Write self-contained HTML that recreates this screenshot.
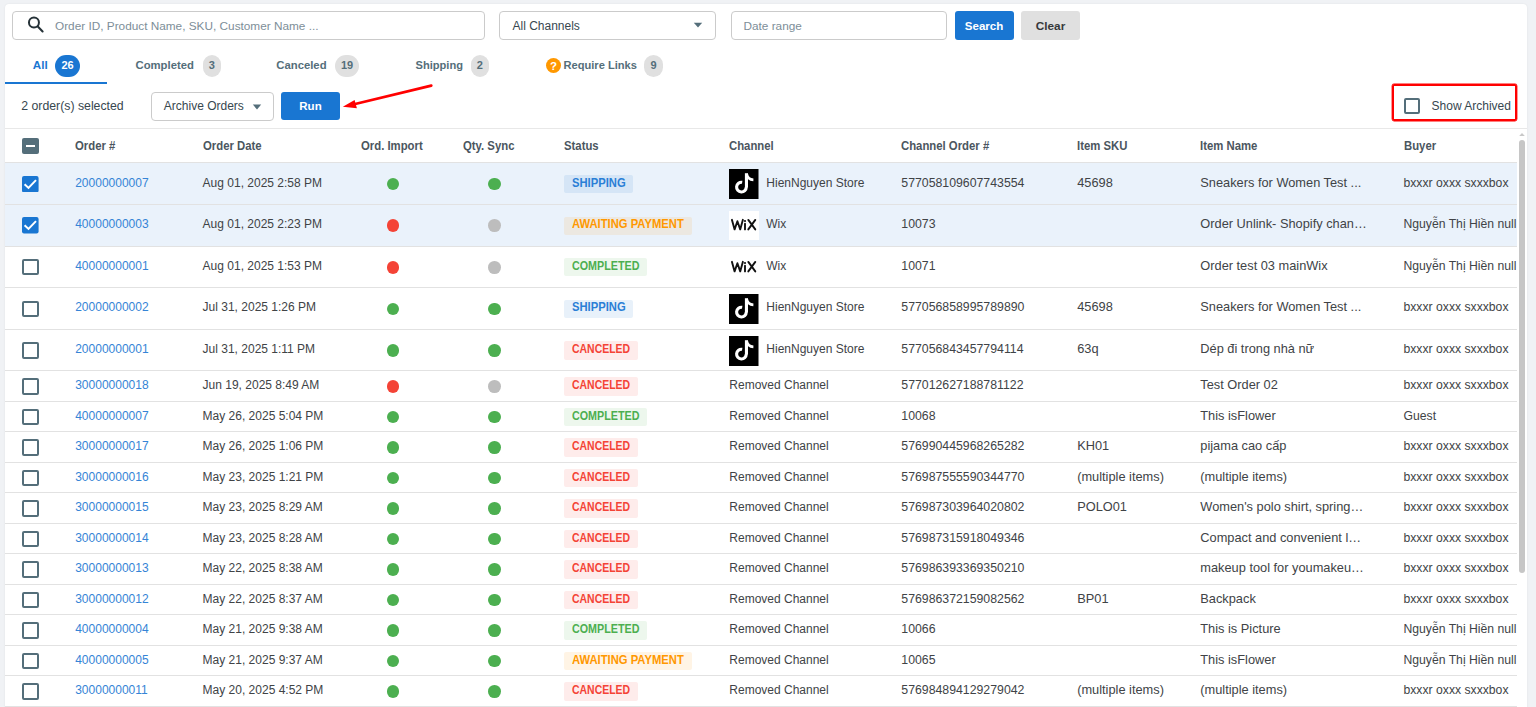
<!DOCTYPE html>
<html><head><meta charset="utf-8"><style>
html,body{margin:0;padding:0;}
body{width:1536px;height:707px;overflow:hidden;position:relative;background:#f0f2f5;font-family:"Liberation Sans", sans-serif;}
.t{position:absolute;white-space:nowrap;line-height:20px;height:20px;}
.badge{position:absolute;border-radius:12px;font-size:11px;font-weight:bold;text-align:center;line-height:20.5px;}
.sb{position:absolute;height:18.4px;border-radius:2px;}
</style></head><body>
<div style="position:absolute;left:5px;top:4px;width:1522px;height:760px;background:#fff;border-radius:4px;box-shadow:0 0 2px rgba(0,0,0,0.08);"></div>
<div style="position:absolute;left:12px;top:11px;width:471px;height:27px;border:1px solid #cbcbcb;border-radius:4px;background:#fff;"></div>
<svg style="position:absolute;left:26px;top:15px" width="20" height="20" viewBox="0 0 20 20"><circle cx="7.95" cy="7.5" r="5" fill="none" stroke="#263238" stroke-width="2"/><line x1="11.8" y1="11.6" x2="16.6" y2="16.4" stroke="#263238" stroke-width="2.1" stroke-linecap="round"/></svg>
<div class="t" style="left:55px;top:15.7px;font-size:11.8px;font-weight:normal;color:#7d8e98;">Order ID, Product Name, SKU, Customer Name ...</div>
<div style="position:absolute;left:499px;top:11px;width:215px;height:27px;border:1px solid #cbcbcb;border-radius:4px;background:#fff;"></div>
<div class="t" style="left:512.5px;top:15.7px;font-size:12px;font-weight:normal;color:#37474f;">All Channels</div>
<svg style="position:absolute;left:693px;top:22px" width="10" height="7" viewBox="0 0 10 7"><path d="M0.8 0.8 L9.2 0.8 L5 5.6 Z" fill="#546e7a"/></svg>
<div style="position:absolute;left:731px;top:11px;width:214px;height:27px;border:1px solid #cbcbcb;border-radius:4px;background:#fff;"></div>
<div class="t" style="left:743.5px;top:15.7px;font-size:11.8px;font-weight:normal;color:#7d8e98;">Date range</div>
<div style="position:absolute;left:954.5px;top:11px;width:59px;height:28.5px;background:#1976d2;border-radius:3px;"></div>
<div class="t" style="left:954.5px;width:59px;text-align:center;top:15.5px;font-size:11.5px;font-weight:bold;color:#fff">Search</div>
<div style="position:absolute;left:1021px;top:11px;width:59px;height:28.5px;background:#e0e0e0;border-radius:3px;"></div>
<div class="t" style="left:1021px;width:59px;text-align:center;top:15.5px;font-size:11.8px;font-weight:bold;color:#37393b">Clear</div>
<div class="t" style="left:32.8px;top:55.0px;font-size:11.6px;font-weight:bold;color:#1976d2;">All</div>
<div class="badge" style="left:55px;top:54.5px;width:25px;height:22.5px;background:#1976d2;color:#fff">26</div>
<div style="position:absolute;left:5px;top:82px;width:102px;height:2px;background:#1976d2;"></div>
<div class="t" style="left:135.5px;top:55.0px;font-size:11.3px;font-weight:bold;color:#546e7a;">Completed</div>
<div class="badge" style="left:202.6px;top:54.5px;width:18.2px;height:22px;background:#e0e0e0;color:#546e7a">3</div>
<div class="t" style="left:276.3px;top:55.0px;font-size:11.3px;font-weight:bold;color:#546e7a;">Canceled</div>
<div class="badge" style="left:334.8px;top:54.5px;width:24.5px;height:22px;background:#e0e0e0;color:#546e7a">19</div>
<div class="t" style="left:415.5px;top:55.0px;font-size:11.1px;font-weight:bold;color:#546e7a;">Shipping</div>
<div class="badge" style="left:470.7px;top:54.5px;width:18.3px;height:22px;background:#e0e0e0;color:#546e7a">2</div>
<svg style="position:absolute;left:546.4px;top:57.7px" width="15" height="15" viewBox="0 0 15 15"><circle cx="7.5" cy="7.5" r="7.5" fill="#ff9800"/><text x="7.5" y="11.6" text-anchor="middle" font-family="Liberation Sans" font-weight="bold" font-size="11.5" fill="#fff">?</text></svg>
<div class="t" style="left:563.5px;top:55.0px;font-size:11.1px;font-weight:bold;color:#546e7a;">Require Links</div>
<div class="badge" style="left:644.3px;top:54.5px;width:18.6px;height:22px;background:#e0e0e0;color:#546e7a">9</div>
<div class="t" style="left:21.2px;top:96px;font-size:12.3px;font-weight:normal;color:#37474f;">2 order(s) selected</div>
<div style="position:absolute;left:151px;top:92px;width:120.5px;height:27px;border:1px solid #cbcbcb;border-radius:4px;background:#fff;"></div>
<div class="t" style="left:163.8px;top:95.9px;font-size:12px;font-weight:normal;color:#37474f;">Archive Orders</div>
<svg style="position:absolute;left:251.5px;top:104px" width="10" height="7" viewBox="0 0 10 7"><path d="M0.8 0.5 L9.2 0.5 L5 5.4 Z" fill="#546e7a"/></svg>
<div style="position:absolute;left:281px;top:92px;width:59.2px;height:28px;background:#1976d2;border-radius:3px;"></div>
<div class="t" style="left:281px;width:59px;text-align:center;top:96px;font-size:11.5px;font-weight:bold;color:#fff">Run</div>
<svg style="position:absolute;left:0;top:0" width="460" height="130" viewBox="0 0 460 130"><line x1="431.3" y1="85.6" x2="352" y2="104.8" stroke="#ff0000" stroke-width="2.7" stroke-linecap="round"/><path d="M342.8 106.8 L354.6 100 L356.9 108.2 Z" fill="#ff0000"/></svg>
<div style="position:absolute;left:1392px;top:84px;width:121.2px;height:32.8px;border:2px solid #ff0000;border-radius:2px;box-shadow:0 0 0 0.4px #ff0000;"></div>
<div style="position:absolute;left:1404px;top:98.3px;width:12px;height:12px;border:2px solid #546e7a;border-radius:2px;"></div>
<div class="t" style="left:1431.6px;top:95.9px;font-size:12px;font-weight:normal;color:#37474f;">Show Archived</div>
<div style="position:absolute;left:5px;top:128px;width:1522px;height:1px;background:#e8e8e8;"></div>
<div class="t" style="left:75.2px;top:136px;font-size:12.4px;font-weight:bold;color:#4b5660;transform:scaleX(0.915);transform-origin:0 0;">Order #</div>
<div class="t" style="left:202.6px;top:136px;font-size:12.4px;font-weight:bold;color:#4b5660;transform:scaleX(0.915);transform-origin:0 0;">Order Date</div>
<div class="t" style="left:360.9px;top:136px;font-size:12.4px;font-weight:bold;color:#4b5660;transform:scaleX(0.915);transform-origin:0 0;">Ord. Import</div>
<div class="t" style="left:462.5px;top:136px;font-size:12.4px;font-weight:bold;color:#4b5660;transform:scaleX(0.915);transform-origin:0 0;">Qty. Sync</div>
<div class="t" style="left:564.3px;top:136px;font-size:12.4px;font-weight:bold;color:#4b5660;transform:scaleX(0.915);transform-origin:0 0;">Status</div>
<div class="t" style="left:729.4px;top:136px;font-size:12.4px;font-weight:bold;color:#4b5660;transform:scaleX(0.915);transform-origin:0 0;">Channel</div>
<div class="t" style="left:901.3px;top:136px;font-size:12.4px;font-weight:bold;color:#4b5660;transform:scaleX(0.915);transform-origin:0 0;">Channel Order #</div>
<div class="t" style="left:1077.2px;top:136px;font-size:12.4px;font-weight:bold;color:#4b5660;transform:scaleX(0.915);transform-origin:0 0;">Item SKU</div>
<div class="t" style="left:1200.3px;top:136px;font-size:12.4px;font-weight:bold;color:#4b5660;transform:scaleX(0.915);transform-origin:0 0;">Item Name</div>
<div class="t" style="left:1403.7px;top:136px;font-size:12.4px;font-weight:bold;color:#4b5660;transform:scaleX(0.915);transform-origin:0 0;">Buyer</div>
<div style="position:absolute;left:22.2px;top:138px;width:16.6px;height:16px;background:#546e7a;border-radius:2px;"></div>
<div style="position:absolute;left:26px;top:145px;width:9px;height:2px;background:#fff;"></div>
<div style="position:absolute;left:5px;top:163.3px;width:1512px;height:41.6px;background:#eaf2fb;"></div>
<svg style="position:absolute;left:22.2px;top:175.70px" width="16.6" height="16.4" viewBox="0 0 16.6 16.4"><rect width="16.6" height="16.4" rx="2" fill="#1976d2"/><path d="M2.6 8.2 L6.5 11.9 L14 4.1" fill="none" stroke="#fff" stroke-width="2"/></svg>
<div class="t" style="left:75.2px;top:173px;font-size:12px;font-weight:normal;color:#3584d6;">20000000007</div>
<div class="t" style="left:202.6px;top:173px;font-size:12px;font-weight:normal;color:#404346;">Aug 01, 2025 2:58 PM</div>
<div style="position:absolute;left:386.6px;top:177.7px;width:12.8px;height:12.8px;background:#4caf50;border-radius:50%;"></div>
<div style="position:absolute;left:488.2px;top:177.7px;width:12.8px;height:12.8px;background:#4caf50;border-radius:50%;"></div>
<div class="sb" style="left:564px;top:174.90px;width:69px;background:rgba(25,118,210,0.1)"></div>
<div class="t" style="left:572px;top:173px;font-size:12.2px;font-weight:bold;color:#2a7fd6;transform:scaleX(0.921);transform-origin:0 0;">SHIPPING</div>
<div style="position:absolute;left:729px;top:169.10px;width:29.5px;height:30px"><svg width="29.5" height="30" viewBox="0 0 29.5 30" style="position:absolute;left:0;top:0"><rect width="29.5" height="30" fill="#000"/><path d="M17.3 18.1 A4.85 4.85 0 1 1 13.2 13.3" fill="none" stroke="#fff" stroke-width="3.1"/><path d="M17.45 4.2 V18.3" stroke="#fff" stroke-width="3.1"/><path d="M17.6 5 Q18.8 10.6 24.4 10.8" fill="none" stroke="#fff" stroke-width="2.8"/></svg></div>
<div class="t" style="left:766.3px;top:173px;font-size:12px;font-weight:normal;color:#404346;">HienNguyen Store</div>
<div class="t" style="left:901.3px;top:173px;font-size:12.3px;font-weight:normal;color:#404346;">577058109607743554</div>
<div class="t" style="left:1077.2px;top:173px;font-size:12.8px;font-weight:normal;color:#404346;">45698</div>
<div class="t" style="left:1200.3px;top:173px;font-size:12.8px;font-weight:normal;color:#404346;">Sneakers for Women Test ...</div>
<div class="t" style="left:1403.5px;top:173px;font-size:12.2px;font-weight:normal;color:#404346;">bxxxr oxxx sxxxbox</div>
<div style="position:absolute;left:5px;top:204.9px;width:1512px;height:41.6px;background:#eaf2fb;"></div>
<svg style="position:absolute;left:22.2px;top:217.30px" width="16.6" height="16.4" viewBox="0 0 16.6 16.4"><rect width="16.6" height="16.4" rx="2" fill="#1976d2"/><path d="M2.6 8.2 L6.5 11.9 L14 4.1" fill="none" stroke="#fff" stroke-width="2"/></svg>
<div class="t" style="left:75.2px;top:214px;font-size:12px;font-weight:normal;color:#3584d6;">40000000003</div>
<div class="t" style="left:202.6px;top:214px;font-size:12px;font-weight:normal;color:#404346;">Aug 01, 2025 2:23 PM</div>
<div style="position:absolute;left:386.6px;top:219.3px;width:12.8px;height:12.8px;background:#f44336;border-radius:50%;"></div>
<div style="position:absolute;left:488.2px;top:219.3px;width:12.8px;height:12.8px;background:#bdbdbd;border-radius:50%;"></div>
<div class="sb" style="left:564px;top:216.50px;width:128px;background:rgba(255,152,0,0.1)"></div>
<div class="t" style="left:572px;top:214px;font-size:12.2px;font-weight:bold;color:#ff9800;transform:scaleX(0.922);transform-origin:0 0;">AWAITING PAYMENT</div>
<div style="position:absolute;left:729px;top:211.1px;width:29.5px;height:29.2px;background:#fff;"></div>
<svg style="position:absolute;left:729px;top:210.40px" width="29.5" height="29.2" viewBox="0 0 29.5 29.2"><g fill="none" stroke="#111" stroke-width="1.9" stroke-linecap="round" stroke-linejoin="round"><path d="M2.9 9.8 L5.6 19.4 L8.4 11.2 L11.2 19.4 L13.9 9.8"/><path d="M16 13.6 V19.4"/><path d="M19.3 9.9 L26.3 19.4 M26.3 9.9 L19.3 19.4"/></g><circle cx="16" cy="11" r="1.1" fill="#111"/></svg>
<div class="t" style="left:766.3px;top:214px;font-size:12px;font-weight:normal;color:#404346;">Wix</div>
<div class="t" style="left:901.3px;top:214px;font-size:12.3px;font-weight:normal;color:#404346;">10073</div>
<div class="t" style="left:1200.3px;top:214px;font-size:12.8px;font-weight:normal;color:#404346;">Order Unlink- Shopify chan…</div>
<div class="t" style="left:1403.5px;top:214px;font-size:12.2px;font-weight:normal;color:#404346;">Nguyễn Thị Hiền null</div>
<div style="position:absolute;left:5px;top:246.5px;width:1512px;height:41.6px;background:#fff;"></div>
<div style="position:absolute;left:22.2px;top:259.1px;width:12.6px;height:12.4px;border:2px solid #546e7a;border-radius:2px;"></div>
<div class="t" style="left:75.2px;top:256px;font-size:12px;font-weight:normal;color:#3584d6;">40000000001</div>
<div class="t" style="left:202.6px;top:256px;font-size:12px;font-weight:normal;color:#404346;">Aug 01, 2025 1:53 PM</div>
<div style="position:absolute;left:386.6px;top:260.9px;width:12.8px;height:12.8px;background:#f44336;border-radius:50%;"></div>
<div style="position:absolute;left:488.2px;top:260.9px;width:12.8px;height:12.8px;background:#bdbdbd;border-radius:50%;"></div>
<div class="sb" style="left:564px;top:258.10px;width:83px;background:rgba(76,175,80,0.1)"></div>
<div class="t" style="left:572px;top:256px;font-size:12.2px;font-weight:bold;color:#4caf50;transform:scaleX(0.882);transform-origin:0 0;">COMPLETED</div>
<div style="position:absolute;left:729px;top:252.7px;width:29.5px;height:29.2px;background:#fff;"></div>
<svg style="position:absolute;left:729px;top:252.00px" width="29.5" height="29.2" viewBox="0 0 29.5 29.2"><g fill="none" stroke="#111" stroke-width="1.9" stroke-linecap="round" stroke-linejoin="round"><path d="M2.9 9.8 L5.6 19.4 L8.4 11.2 L11.2 19.4 L13.9 9.8"/><path d="M16 13.6 V19.4"/><path d="M19.3 9.9 L26.3 19.4 M26.3 9.9 L19.3 19.4"/></g><circle cx="16" cy="11" r="1.1" fill="#111"/></svg>
<div class="t" style="left:766.3px;top:256px;font-size:12px;font-weight:normal;color:#404346;">Wix</div>
<div class="t" style="left:901.3px;top:256px;font-size:12.3px;font-weight:normal;color:#404346;">10071</div>
<div class="t" style="left:1200.3px;top:256px;font-size:12.8px;font-weight:normal;color:#404346;">Order test 03 mainWix</div>
<div class="t" style="left:1403.5px;top:256px;font-size:12.2px;font-weight:normal;color:#404346;">Nguyễn Thị Hiền null</div>
<div style="position:absolute;left:5px;top:288.1px;width:1512px;height:41.6px;background:#fff;"></div>
<div style="position:absolute;left:22.2px;top:300.7px;width:12.6px;height:12.4px;border:2px solid #546e7a;border-radius:2px;"></div>
<div class="t" style="left:75.2px;top:297px;font-size:12px;font-weight:normal;color:#3584d6;">20000000002</div>
<div class="t" style="left:202.6px;top:297px;font-size:12px;font-weight:normal;color:#404346;">Jul 31, 2025 1:26 PM</div>
<div style="position:absolute;left:386.6px;top:302.5px;width:12.8px;height:12.8px;background:#4caf50;border-radius:50%;"></div>
<div style="position:absolute;left:488.2px;top:302.5px;width:12.8px;height:12.8px;background:#4caf50;border-radius:50%;"></div>
<div class="sb" style="left:564px;top:299.70px;width:69px;background:rgba(25,118,210,0.1)"></div>
<div class="t" style="left:572px;top:297px;font-size:12.2px;font-weight:bold;color:#2a7fd6;transform:scaleX(0.921);transform-origin:0 0;">SHIPPING</div>
<div style="position:absolute;left:729px;top:293.90px;width:29.5px;height:30px"><svg width="29.5" height="30" viewBox="0 0 29.5 30" style="position:absolute;left:0;top:0"><rect width="29.5" height="30" fill="#000"/><path d="M17.3 18.1 A4.85 4.85 0 1 1 13.2 13.3" fill="none" stroke="#fff" stroke-width="3.1"/><path d="M17.45 4.2 V18.3" stroke="#fff" stroke-width="3.1"/><path d="M17.6 5 Q18.8 10.6 24.4 10.8" fill="none" stroke="#fff" stroke-width="2.8"/></svg></div>
<div class="t" style="left:766.3px;top:297px;font-size:12px;font-weight:normal;color:#404346;">HienNguyen Store</div>
<div class="t" style="left:901.3px;top:297px;font-size:12.3px;font-weight:normal;color:#404346;">577056858995789890</div>
<div class="t" style="left:1077.2px;top:297px;font-size:12.8px;font-weight:normal;color:#404346;">45698</div>
<div class="t" style="left:1200.3px;top:297px;font-size:12.8px;font-weight:normal;color:#404346;">Sneakers for Women Test ...</div>
<div class="t" style="left:1403.5px;top:297px;font-size:12.2px;font-weight:normal;color:#404346;">bxxxr oxxx sxxxbox</div>
<div style="position:absolute;left:5px;top:329.7px;width:1512px;height:41.6px;background:#fff;"></div>
<div style="position:absolute;left:22.2px;top:342.3px;width:12.6px;height:12.4px;border:2px solid #546e7a;border-radius:2px;"></div>
<div class="t" style="left:75.2px;top:339px;font-size:12px;font-weight:normal;color:#3584d6;">20000000001</div>
<div class="t" style="left:202.6px;top:339px;font-size:12px;font-weight:normal;color:#404346;">Jul 31, 2025 1:11 PM</div>
<div style="position:absolute;left:386.6px;top:344.1px;width:12.8px;height:12.8px;background:#4caf50;border-radius:50%;"></div>
<div style="position:absolute;left:488.2px;top:344.1px;width:12.8px;height:12.8px;background:#4caf50;border-radius:50%;"></div>
<div class="sb" style="left:564px;top:341.30px;width:74px;background:rgba(244,67,54,0.1)"></div>
<div class="t" style="left:572px;top:339px;font-size:12.2px;font-weight:bold;color:#f44336;transform:scaleX(0.857);transform-origin:0 0;">CANCELED</div>
<div style="position:absolute;left:729px;top:335.50px;width:29.5px;height:30px"><svg width="29.5" height="30" viewBox="0 0 29.5 30" style="position:absolute;left:0;top:0"><rect width="29.5" height="30" fill="#000"/><path d="M17.3 18.1 A4.85 4.85 0 1 1 13.2 13.3" fill="none" stroke="#fff" stroke-width="3.1"/><path d="M17.45 4.2 V18.3" stroke="#fff" stroke-width="3.1"/><path d="M17.6 5 Q18.8 10.6 24.4 10.8" fill="none" stroke="#fff" stroke-width="2.8"/></svg></div>
<div class="t" style="left:766.3px;top:339px;font-size:12px;font-weight:normal;color:#404346;">HienNguyen Store</div>
<div class="t" style="left:901.3px;top:339px;font-size:12.3px;font-weight:normal;color:#404346;">577056843457794114</div>
<div class="t" style="left:1077.2px;top:339px;font-size:12.8px;font-weight:normal;color:#404346;">63q</div>
<div class="t" style="left:1200.3px;top:339px;font-size:12.8px;font-weight:normal;color:#404346;">Dép đi trong nhà nữ</div>
<div class="t" style="left:1403.5px;top:339px;font-size:12.2px;font-weight:normal;color:#404346;">bxxxr oxxx sxxxbox</div>
<div style="position:absolute;left:5px;top:371.3px;width:1512px;height:30.5px;background:#fff;"></div>
<div style="position:absolute;left:22.2px;top:378.35px;width:12.6px;height:12.4px;border:2px solid #546e7a;border-radius:2px;"></div>
<div class="t" style="left:75.2px;top:375px;font-size:12px;font-weight:normal;color:#3584d6;">30000000018</div>
<div class="t" style="left:202.6px;top:375px;font-size:12px;font-weight:normal;color:#404346;">Jun 19, 2025 8:49 AM</div>
<div style="position:absolute;left:386.6px;top:380.15px;width:12.8px;height:12.8px;background:#f44336;border-radius:50%;"></div>
<div style="position:absolute;left:488.2px;top:380.15px;width:12.8px;height:12.8px;background:#bdbdbd;border-radius:50%;"></div>
<div class="sb" style="left:564px;top:377.35px;width:74px;background:rgba(244,67,54,0.1)"></div>
<div class="t" style="left:572px;top:375px;font-size:12.2px;font-weight:bold;color:#f44336;transform:scaleX(0.857);transform-origin:0 0;">CANCELED</div>
<div class="t" style="left:729.3px;top:375px;font-size:12px;font-weight:normal;color:#404346;">Removed Channel</div>
<div class="t" style="left:901.3px;top:375px;font-size:12.3px;font-weight:normal;color:#404346;">577012627188781122</div>
<div class="t" style="left:1200.3px;top:375px;font-size:12.8px;font-weight:normal;color:#404346;">Test Order 02</div>
<div class="t" style="left:1403.5px;top:375px;font-size:12.2px;font-weight:normal;color:#404346;">bxxxr oxxx sxxxbox</div>
<div style="position:absolute;left:5px;top:401.8px;width:1512px;height:30.5px;background:#fff;"></div>
<div style="position:absolute;left:22.2px;top:408.85px;width:12.6px;height:12.4px;border:2px solid #546e7a;border-radius:2px;"></div>
<div class="t" style="left:75.2px;top:406px;font-size:12px;font-weight:normal;color:#3584d6;">40000000007</div>
<div class="t" style="left:202.6px;top:406px;font-size:12px;font-weight:normal;color:#404346;">May 26, 2025 5:04 PM</div>
<div style="position:absolute;left:386.6px;top:410.65px;width:12.8px;height:12.8px;background:#4caf50;border-radius:50%;"></div>
<div style="position:absolute;left:488.2px;top:410.65px;width:12.8px;height:12.8px;background:#4caf50;border-radius:50%;"></div>
<div class="sb" style="left:564px;top:407.85px;width:83px;background:rgba(76,175,80,0.1)"></div>
<div class="t" style="left:572px;top:406px;font-size:12.2px;font-weight:bold;color:#4caf50;transform:scaleX(0.882);transform-origin:0 0;">COMPLETED</div>
<div class="t" style="left:729.3px;top:406px;font-size:12px;font-weight:normal;color:#404346;">Removed Channel</div>
<div class="t" style="left:901.3px;top:406px;font-size:12.3px;font-weight:normal;color:#404346;">10068</div>
<div class="t" style="left:1200.3px;top:406px;font-size:12.8px;font-weight:normal;color:#404346;">This isFlower</div>
<div class="t" style="left:1403.5px;top:406px;font-size:12.2px;font-weight:normal;color:#404346;">Guest</div>
<div style="position:absolute;left:5px;top:432.3px;width:1512px;height:30.5px;background:#fff;"></div>
<div style="position:absolute;left:22.2px;top:439.35px;width:12.6px;height:12.4px;border:2px solid #546e7a;border-radius:2px;"></div>
<div class="t" style="left:75.2px;top:436px;font-size:12px;font-weight:normal;color:#3584d6;">30000000017</div>
<div class="t" style="left:202.6px;top:436px;font-size:12px;font-weight:normal;color:#404346;">May 26, 2025 1:06 PM</div>
<div style="position:absolute;left:386.6px;top:441.15px;width:12.8px;height:12.8px;background:#4caf50;border-radius:50%;"></div>
<div style="position:absolute;left:488.2px;top:441.15px;width:12.8px;height:12.8px;background:#4caf50;border-radius:50%;"></div>
<div class="sb" style="left:564px;top:438.35px;width:74px;background:rgba(244,67,54,0.1)"></div>
<div class="t" style="left:572px;top:436px;font-size:12.2px;font-weight:bold;color:#f44336;transform:scaleX(0.857);transform-origin:0 0;">CANCELED</div>
<div class="t" style="left:729.3px;top:436px;font-size:12px;font-weight:normal;color:#404346;">Removed Channel</div>
<div class="t" style="left:901.3px;top:436px;font-size:12.3px;font-weight:normal;color:#404346;">576990445968265282</div>
<div class="t" style="left:1077.2px;top:436px;font-size:12.8px;font-weight:normal;color:#404346;">KH01</div>
<div class="t" style="left:1200.3px;top:436px;font-size:12.8px;font-weight:normal;color:#404346;">pijama cao cấp</div>
<div class="t" style="left:1403.5px;top:436px;font-size:12.2px;font-weight:normal;color:#404346;">bxxxr oxxx sxxxbox</div>
<div style="position:absolute;left:5px;top:462.8px;width:1512px;height:30.5px;background:#fff;"></div>
<div style="position:absolute;left:22.2px;top:469.85px;width:12.6px;height:12.4px;border:2px solid #546e7a;border-radius:2px;"></div>
<div class="t" style="left:75.2px;top:467px;font-size:12px;font-weight:normal;color:#3584d6;">30000000016</div>
<div class="t" style="left:202.6px;top:467px;font-size:12px;font-weight:normal;color:#404346;">May 23, 2025 1:21 PM</div>
<div style="position:absolute;left:386.6px;top:471.65px;width:12.8px;height:12.8px;background:#4caf50;border-radius:50%;"></div>
<div style="position:absolute;left:488.2px;top:471.65px;width:12.8px;height:12.8px;background:#4caf50;border-radius:50%;"></div>
<div class="sb" style="left:564px;top:468.85px;width:74px;background:rgba(244,67,54,0.1)"></div>
<div class="t" style="left:572px;top:467px;font-size:12.2px;font-weight:bold;color:#f44336;transform:scaleX(0.857);transform-origin:0 0;">CANCELED</div>
<div class="t" style="left:729.3px;top:467px;font-size:12px;font-weight:normal;color:#404346;">Removed Channel</div>
<div class="t" style="left:901.3px;top:467px;font-size:12.3px;font-weight:normal;color:#404346;">576987555590344770</div>
<div class="t" style="left:1077.2px;top:467px;font-size:12.8px;font-weight:normal;color:#404346;">(multiple items)</div>
<div class="t" style="left:1200.3px;top:467px;font-size:12.8px;font-weight:normal;color:#404346;">(multiple items)</div>
<div class="t" style="left:1403.5px;top:467px;font-size:12.2px;font-weight:normal;color:#404346;">bxxxr oxxx sxxxbox</div>
<div style="position:absolute;left:5px;top:493.3px;width:1512px;height:30.5px;background:#fff;"></div>
<div style="position:absolute;left:22.2px;top:500.35px;width:12.6px;height:12.4px;border:2px solid #546e7a;border-radius:2px;"></div>
<div class="t" style="left:75.2px;top:497px;font-size:12px;font-weight:normal;color:#3584d6;">30000000015</div>
<div class="t" style="left:202.6px;top:497px;font-size:12px;font-weight:normal;color:#404346;">May 23, 2025 8:29 AM</div>
<div style="position:absolute;left:386.6px;top:502.15px;width:12.8px;height:12.8px;background:#4caf50;border-radius:50%;"></div>
<div style="position:absolute;left:488.2px;top:502.15px;width:12.8px;height:12.8px;background:#4caf50;border-radius:50%;"></div>
<div class="sb" style="left:564px;top:499.35px;width:74px;background:rgba(244,67,54,0.1)"></div>
<div class="t" style="left:572px;top:497px;font-size:12.2px;font-weight:bold;color:#f44336;transform:scaleX(0.857);transform-origin:0 0;">CANCELED</div>
<div class="t" style="left:729.3px;top:497px;font-size:12px;font-weight:normal;color:#404346;">Removed Channel</div>
<div class="t" style="left:901.3px;top:497px;font-size:12.3px;font-weight:normal;color:#404346;">576987303964020802</div>
<div class="t" style="left:1077.2px;top:497px;font-size:12.8px;font-weight:normal;color:#404346;">POLO01</div>
<div class="t" style="left:1200.3px;top:497px;font-size:12.8px;font-weight:normal;color:#404346;">Women's polo shirt, spring…</div>
<div class="t" style="left:1403.5px;top:497px;font-size:12.2px;font-weight:normal;color:#404346;">bxxxr oxxx sxxxbox</div>
<div style="position:absolute;left:5px;top:523.8px;width:1512px;height:30.5px;background:#fff;"></div>
<div style="position:absolute;left:22.2px;top:530.85px;width:12.6px;height:12.4px;border:2px solid #546e7a;border-radius:2px;"></div>
<div class="t" style="left:75.2px;top:528px;font-size:12px;font-weight:normal;color:#3584d6;">30000000014</div>
<div class="t" style="left:202.6px;top:528px;font-size:12px;font-weight:normal;color:#404346;">May 23, 2025 8:28 AM</div>
<div style="position:absolute;left:386.6px;top:532.65px;width:12.8px;height:12.8px;background:#4caf50;border-radius:50%;"></div>
<div style="position:absolute;left:488.2px;top:532.65px;width:12.8px;height:12.8px;background:#4caf50;border-radius:50%;"></div>
<div class="sb" style="left:564px;top:529.85px;width:74px;background:rgba(244,67,54,0.1)"></div>
<div class="t" style="left:572px;top:528px;font-size:12.2px;font-weight:bold;color:#f44336;transform:scaleX(0.857);transform-origin:0 0;">CANCELED</div>
<div class="t" style="left:729.3px;top:528px;font-size:12px;font-weight:normal;color:#404346;">Removed Channel</div>
<div class="t" style="left:901.3px;top:528px;font-size:12.3px;font-weight:normal;color:#404346;">576987315918049346</div>
<div class="t" style="left:1200.3px;top:528px;font-size:12.8px;font-weight:normal;color:#404346;">Compact and convenient l…</div>
<div class="t" style="left:1403.5px;top:528px;font-size:12.2px;font-weight:normal;color:#404346;">bxxxr oxxx sxxxbox</div>
<div style="position:absolute;left:5px;top:554.3px;width:1512px;height:30.5px;background:#fff;"></div>
<div style="position:absolute;left:22.2px;top:561.35px;width:12.6px;height:12.4px;border:2px solid #546e7a;border-radius:2px;"></div>
<div class="t" style="left:75.2px;top:558px;font-size:12px;font-weight:normal;color:#3584d6;">30000000013</div>
<div class="t" style="left:202.6px;top:558px;font-size:12px;font-weight:normal;color:#404346;">May 22, 2025 8:38 AM</div>
<div style="position:absolute;left:386.6px;top:563.15px;width:12.8px;height:12.8px;background:#4caf50;border-radius:50%;"></div>
<div style="position:absolute;left:488.2px;top:563.15px;width:12.8px;height:12.8px;background:#4caf50;border-radius:50%;"></div>
<div class="sb" style="left:564px;top:560.35px;width:74px;background:rgba(244,67,54,0.1)"></div>
<div class="t" style="left:572px;top:558px;font-size:12.2px;font-weight:bold;color:#f44336;transform:scaleX(0.857);transform-origin:0 0;">CANCELED</div>
<div class="t" style="left:729.3px;top:558px;font-size:12px;font-weight:normal;color:#404346;">Removed Channel</div>
<div class="t" style="left:901.3px;top:558px;font-size:12.3px;font-weight:normal;color:#404346;">576986393369350210</div>
<div class="t" style="left:1200.3px;top:558px;font-size:12.8px;font-weight:normal;color:#404346;">makeup tool for youmakeu…</div>
<div class="t" style="left:1403.5px;top:558px;font-size:12.2px;font-weight:normal;color:#404346;">bxxxr oxxx sxxxbox</div>
<div style="position:absolute;left:5px;top:584.8px;width:1512px;height:30.5px;background:#fff;"></div>
<div style="position:absolute;left:22.2px;top:591.85px;width:12.6px;height:12.4px;border:2px solid #546e7a;border-radius:2px;"></div>
<div class="t" style="left:75.2px;top:589px;font-size:12px;font-weight:normal;color:#3584d6;">30000000012</div>
<div class="t" style="left:202.6px;top:589px;font-size:12px;font-weight:normal;color:#404346;">May 22, 2025 8:37 AM</div>
<div style="position:absolute;left:386.6px;top:593.65px;width:12.8px;height:12.8px;background:#4caf50;border-radius:50%;"></div>
<div style="position:absolute;left:488.2px;top:593.65px;width:12.8px;height:12.8px;background:#4caf50;border-radius:50%;"></div>
<div class="sb" style="left:564px;top:590.85px;width:74px;background:rgba(244,67,54,0.1)"></div>
<div class="t" style="left:572px;top:589px;font-size:12.2px;font-weight:bold;color:#f44336;transform:scaleX(0.857);transform-origin:0 0;">CANCELED</div>
<div class="t" style="left:729.3px;top:589px;font-size:12px;font-weight:normal;color:#404346;">Removed Channel</div>
<div class="t" style="left:901.3px;top:589px;font-size:12.3px;font-weight:normal;color:#404346;">576986372159082562</div>
<div class="t" style="left:1077.2px;top:589px;font-size:12.8px;font-weight:normal;color:#404346;">BP01</div>
<div class="t" style="left:1200.3px;top:589px;font-size:12.8px;font-weight:normal;color:#404346;">Backpack</div>
<div class="t" style="left:1403.5px;top:589px;font-size:12.2px;font-weight:normal;color:#404346;">bxxxr oxxx sxxxbox</div>
<div style="position:absolute;left:5px;top:615.3px;width:1512px;height:30.5px;background:#fff;"></div>
<div style="position:absolute;left:22.2px;top:622.35px;width:12.6px;height:12.4px;border:2px solid #546e7a;border-radius:2px;"></div>
<div class="t" style="left:75.2px;top:619px;font-size:12px;font-weight:normal;color:#3584d6;">40000000004</div>
<div class="t" style="left:202.6px;top:619px;font-size:12px;font-weight:normal;color:#404346;">May 21, 2025 9:38 AM</div>
<div style="position:absolute;left:386.6px;top:624.15px;width:12.8px;height:12.8px;background:#4caf50;border-radius:50%;"></div>
<div style="position:absolute;left:488.2px;top:624.15px;width:12.8px;height:12.8px;background:#4caf50;border-radius:50%;"></div>
<div class="sb" style="left:564px;top:621.35px;width:83px;background:rgba(76,175,80,0.1)"></div>
<div class="t" style="left:572px;top:619px;font-size:12.2px;font-weight:bold;color:#4caf50;transform:scaleX(0.882);transform-origin:0 0;">COMPLETED</div>
<div class="t" style="left:729.3px;top:619px;font-size:12px;font-weight:normal;color:#404346;">Removed Channel</div>
<div class="t" style="left:901.3px;top:619px;font-size:12.3px;font-weight:normal;color:#404346;">10066</div>
<div class="t" style="left:1200.3px;top:619px;font-size:12.8px;font-weight:normal;color:#404346;">This is Picture</div>
<div class="t" style="left:1403.5px;top:619px;font-size:12.2px;font-weight:normal;color:#404346;">Nguyễn Thị Hiền null</div>
<div style="position:absolute;left:5px;top:645.8px;width:1512px;height:30.5px;background:#fff;"></div>
<div style="position:absolute;left:22.2px;top:652.85px;width:12.6px;height:12.4px;border:2px solid #546e7a;border-radius:2px;"></div>
<div class="t" style="left:75.2px;top:650px;font-size:12px;font-weight:normal;color:#3584d6;">40000000005</div>
<div class="t" style="left:202.6px;top:650px;font-size:12px;font-weight:normal;color:#404346;">May 21, 2025 9:37 AM</div>
<div style="position:absolute;left:386.6px;top:654.65px;width:12.8px;height:12.8px;background:#4caf50;border-radius:50%;"></div>
<div style="position:absolute;left:488.2px;top:654.65px;width:12.8px;height:12.8px;background:#4caf50;border-radius:50%;"></div>
<div class="sb" style="left:564px;top:651.85px;width:128px;background:rgba(255,152,0,0.1)"></div>
<div class="t" style="left:572px;top:650px;font-size:12.2px;font-weight:bold;color:#ff9800;transform:scaleX(0.922);transform-origin:0 0;">AWAITING PAYMENT</div>
<div class="t" style="left:729.3px;top:650px;font-size:12px;font-weight:normal;color:#404346;">Removed Channel</div>
<div class="t" style="left:901.3px;top:650px;font-size:12.3px;font-weight:normal;color:#404346;">10065</div>
<div class="t" style="left:1200.3px;top:650px;font-size:12.8px;font-weight:normal;color:#404346;">This isFlower</div>
<div class="t" style="left:1403.5px;top:650px;font-size:12.2px;font-weight:normal;color:#404346;">Nguyễn Thị Hiền null</div>
<div style="position:absolute;left:5px;top:676.3px;width:1512px;height:30.5px;background:#fff;"></div>
<div style="position:absolute;left:22.2px;top:683.35px;width:12.6px;height:12.4px;border:2px solid #546e7a;border-radius:2px;"></div>
<div class="t" style="left:75.2px;top:680px;font-size:12px;font-weight:normal;color:#3584d6;">30000000011</div>
<div class="t" style="left:202.6px;top:680px;font-size:12px;font-weight:normal;color:#404346;">May 20, 2025 4:52 PM</div>
<div style="position:absolute;left:386.6px;top:685.15px;width:12.8px;height:12.8px;background:#4caf50;border-radius:50%;"></div>
<div style="position:absolute;left:488.2px;top:685.15px;width:12.8px;height:12.8px;background:#4caf50;border-radius:50%;"></div>
<div class="sb" style="left:564px;top:682.35px;width:74px;background:rgba(244,67,54,0.1)"></div>
<div class="t" style="left:572px;top:680px;font-size:12.2px;font-weight:bold;color:#f44336;transform:scaleX(0.857);transform-origin:0 0;">CANCELED</div>
<div class="t" style="left:729.3px;top:680px;font-size:12px;font-weight:normal;color:#404346;">Removed Channel</div>
<div class="t" style="left:901.3px;top:680px;font-size:12.3px;font-weight:normal;color:#404346;">576984894129279042</div>
<div class="t" style="left:1077.2px;top:680px;font-size:12.8px;font-weight:normal;color:#404346;">(multiple items)</div>
<div class="t" style="left:1200.3px;top:680px;font-size:12.8px;font-weight:normal;color:#404346;">(multiple items)</div>
<div class="t" style="left:1403.5px;top:680px;font-size:12.2px;font-weight:normal;color:#404346;">bxxxr oxxx sxxxbox</div>
<div style="position:absolute;left:5px;top:162px;width:1512px;height:1px;background:#e2e2e2;"></div>
<div style="position:absolute;left:5px;top:204px;width:1512px;height:1px;background:#e2e2e2;"></div>
<div style="position:absolute;left:5px;top:246px;width:1512px;height:1px;background:#e2e2e2;"></div>
<div style="position:absolute;left:5px;top:287px;width:1512px;height:1px;background:#e2e2e2;"></div>
<div style="position:absolute;left:5px;top:329px;width:1512px;height:1px;background:#e2e2e2;"></div>
<div style="position:absolute;left:5px;top:370px;width:1512px;height:1px;background:#e2e2e2;"></div>
<div style="position:absolute;left:5px;top:401px;width:1512px;height:1px;background:#e2e2e2;"></div>
<div style="position:absolute;left:5px;top:431px;width:1512px;height:1px;background:#e2e2e2;"></div>
<div style="position:absolute;left:5px;top:462px;width:1512px;height:1px;background:#e2e2e2;"></div>
<div style="position:absolute;left:5px;top:492px;width:1512px;height:1px;background:#e2e2e2;"></div>
<div style="position:absolute;left:5px;top:523px;width:1512px;height:1px;background:#e2e2e2;"></div>
<div style="position:absolute;left:5px;top:553px;width:1512px;height:1px;background:#e2e2e2;"></div>
<div style="position:absolute;left:5px;top:584px;width:1512px;height:1px;background:#e2e2e2;"></div>
<div style="position:absolute;left:5px;top:614px;width:1512px;height:1px;background:#e2e2e2;"></div>
<div style="position:absolute;left:5px;top:645px;width:1512px;height:1px;background:#e2e2e2;"></div>
<div style="position:absolute;left:5px;top:675px;width:1512px;height:1px;background:#e2e2e2;"></div>
<div style="position:absolute;left:5px;top:706px;width:1512px;height:1px;background:#e2e2e2;"></div>
<svg style="position:absolute;left:1517px;top:130px" width="10" height="10" viewBox="0 0 10 10"><path d="M2.2 6 L5 3 L7.8 6 Z" fill="#c8c8c8"/></svg>
<div style="position:absolute;left:1519px;top:140.2px;width:6px;height:432.5px;background:#c6c6c6;border-radius:3px;"></div>
</body></html>
